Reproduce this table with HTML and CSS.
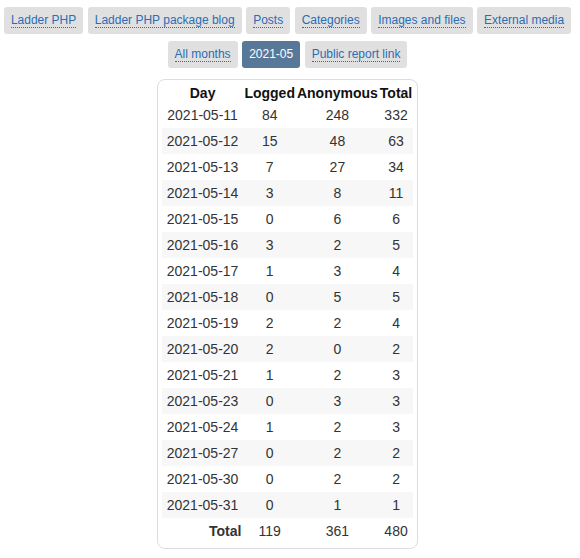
FILE: index.html
```html
<!DOCTYPE html>
<html>
<head>
<meta charset="utf-8">
<link rel="stylesheet" href="styles.css">
</head>
<body>
<nav class="nav">
  <a class="btn" href="#"><span class="lnk">Ladder PHP</span></a>
  <a class="btn" href="#"><span class="lnk">Ladder PHP package blog</span></a>
  <a class="btn" href="#"><span class="lnk">Posts</span></a>
  <a class="btn" href="#"><span class="lnk">Categories</span></a>
  <a class="btn" href="#"><span class="lnk">Images and files</span></a>
  <a class="btn" href="#"><span class="lnk">External media</span></a>
</nav>
<nav class="nav nav2">
  <a class="btn" href="#"><span class="lnk">All months</span></a>
  <span class="btn active">2021-05</span>
  <a class="btn" href="#"><span class="lnk">Public report link</span></a>
</nav>
<div class="card">
  <table class="stats">
    <thead>
      <tr><th>Day</th><th>Logged</th><th>Anonymous</th><th>Total</th></tr>
    </thead>
    <tbody>
      <tr><td>2021-05-11</td><td>84</td><td>248</td><td>332</td></tr>
      <tr><td>2021-05-12</td><td>15</td><td>48</td><td>63</td></tr>
      <tr><td>2021-05-13</td><td>7</td><td>27</td><td>34</td></tr>
      <tr><td>2021-05-14</td><td>3</td><td>8</td><td>11</td></tr>
      <tr><td>2021-05-15</td><td>0</td><td>6</td><td>6</td></tr>
      <tr><td>2021-05-16</td><td>3</td><td>2</td><td>5</td></tr>
      <tr><td>2021-05-17</td><td>1</td><td>3</td><td>4</td></tr>
      <tr><td>2021-05-18</td><td>0</td><td>5</td><td>5</td></tr>
      <tr><td>2021-05-19</td><td>2</td><td>2</td><td>4</td></tr>
      <tr><td>2021-05-20</td><td>2</td><td>0</td><td>2</td></tr>
      <tr><td>2021-05-21</td><td>1</td><td>2</td><td>3</td></tr>
      <tr><td>2021-05-23</td><td>0</td><td>3</td><td>3</td></tr>
      <tr><td>2021-05-24</td><td>1</td><td>2</td><td>3</td></tr>
      <tr><td>2021-05-27</td><td>0</td><td>2</td><td>2</td></tr>
      <tr><td>2021-05-30</td><td>0</td><td>2</td><td>2</td></tr>
      <tr><td>2021-05-31</td><td>0</td><td>1</td><td>1</td></tr>
    </tbody>
    <tfoot>
      <tr><th class="label">Total</th><td>119</td><td>361</td><td>480</td></tr>
    </tfoot>
  </table>
</div>
</body>
</html>
```

FILE: styles.css
```css
html, body {
  margin: 0;
  padding: 0;
  background: #ffffff;
}
body {
  font-family: "Liberation Sans", Arial, sans-serif;
  color: #333333;
  padding: 7px 5px 0 0;
}
.nav {
  display: flex;
  justify-content: center;
  gap: 4.5px;
}
.nav2 {
  margin-top: 7px;
}
.btn {
  display: block;
  background: #e0e0e0;
  border-radius: 3px;
  padding: 6px 7px;
  font-size: 12px;
  line-height: 15px;
  text-decoration: none;
}
.lnk {
  color: #2a6db5;
  border-bottom: 1px dotted #2a6db5;
}
.btn.active {
  background: #577899;
  color: #ffffff;
}
.card {
  width: fit-content;
  margin: 11px auto 0;
  border: 1px solid #dddddd;
  border-radius: 8px;
  padding: 4px;
}
.stats {
  border-collapse: collapse;
  border-spacing: 0;
  font-size: 14px;
  line-height: 16px;
}
.stats th {
  color: #111111;
  font-weight: bold;
  padding: 1px 1px;
  text-align: center;
}
.stats td {
  padding: 5px 5px;
  text-align: center;
}
.stats tbody tr:nth-child(even) td {
  background: #f7f7f7;
}
.stats tfoot th.label {
  text-align: right;
  padding: 5px 2px 5px 5px;
  color: #333333;
}
```
